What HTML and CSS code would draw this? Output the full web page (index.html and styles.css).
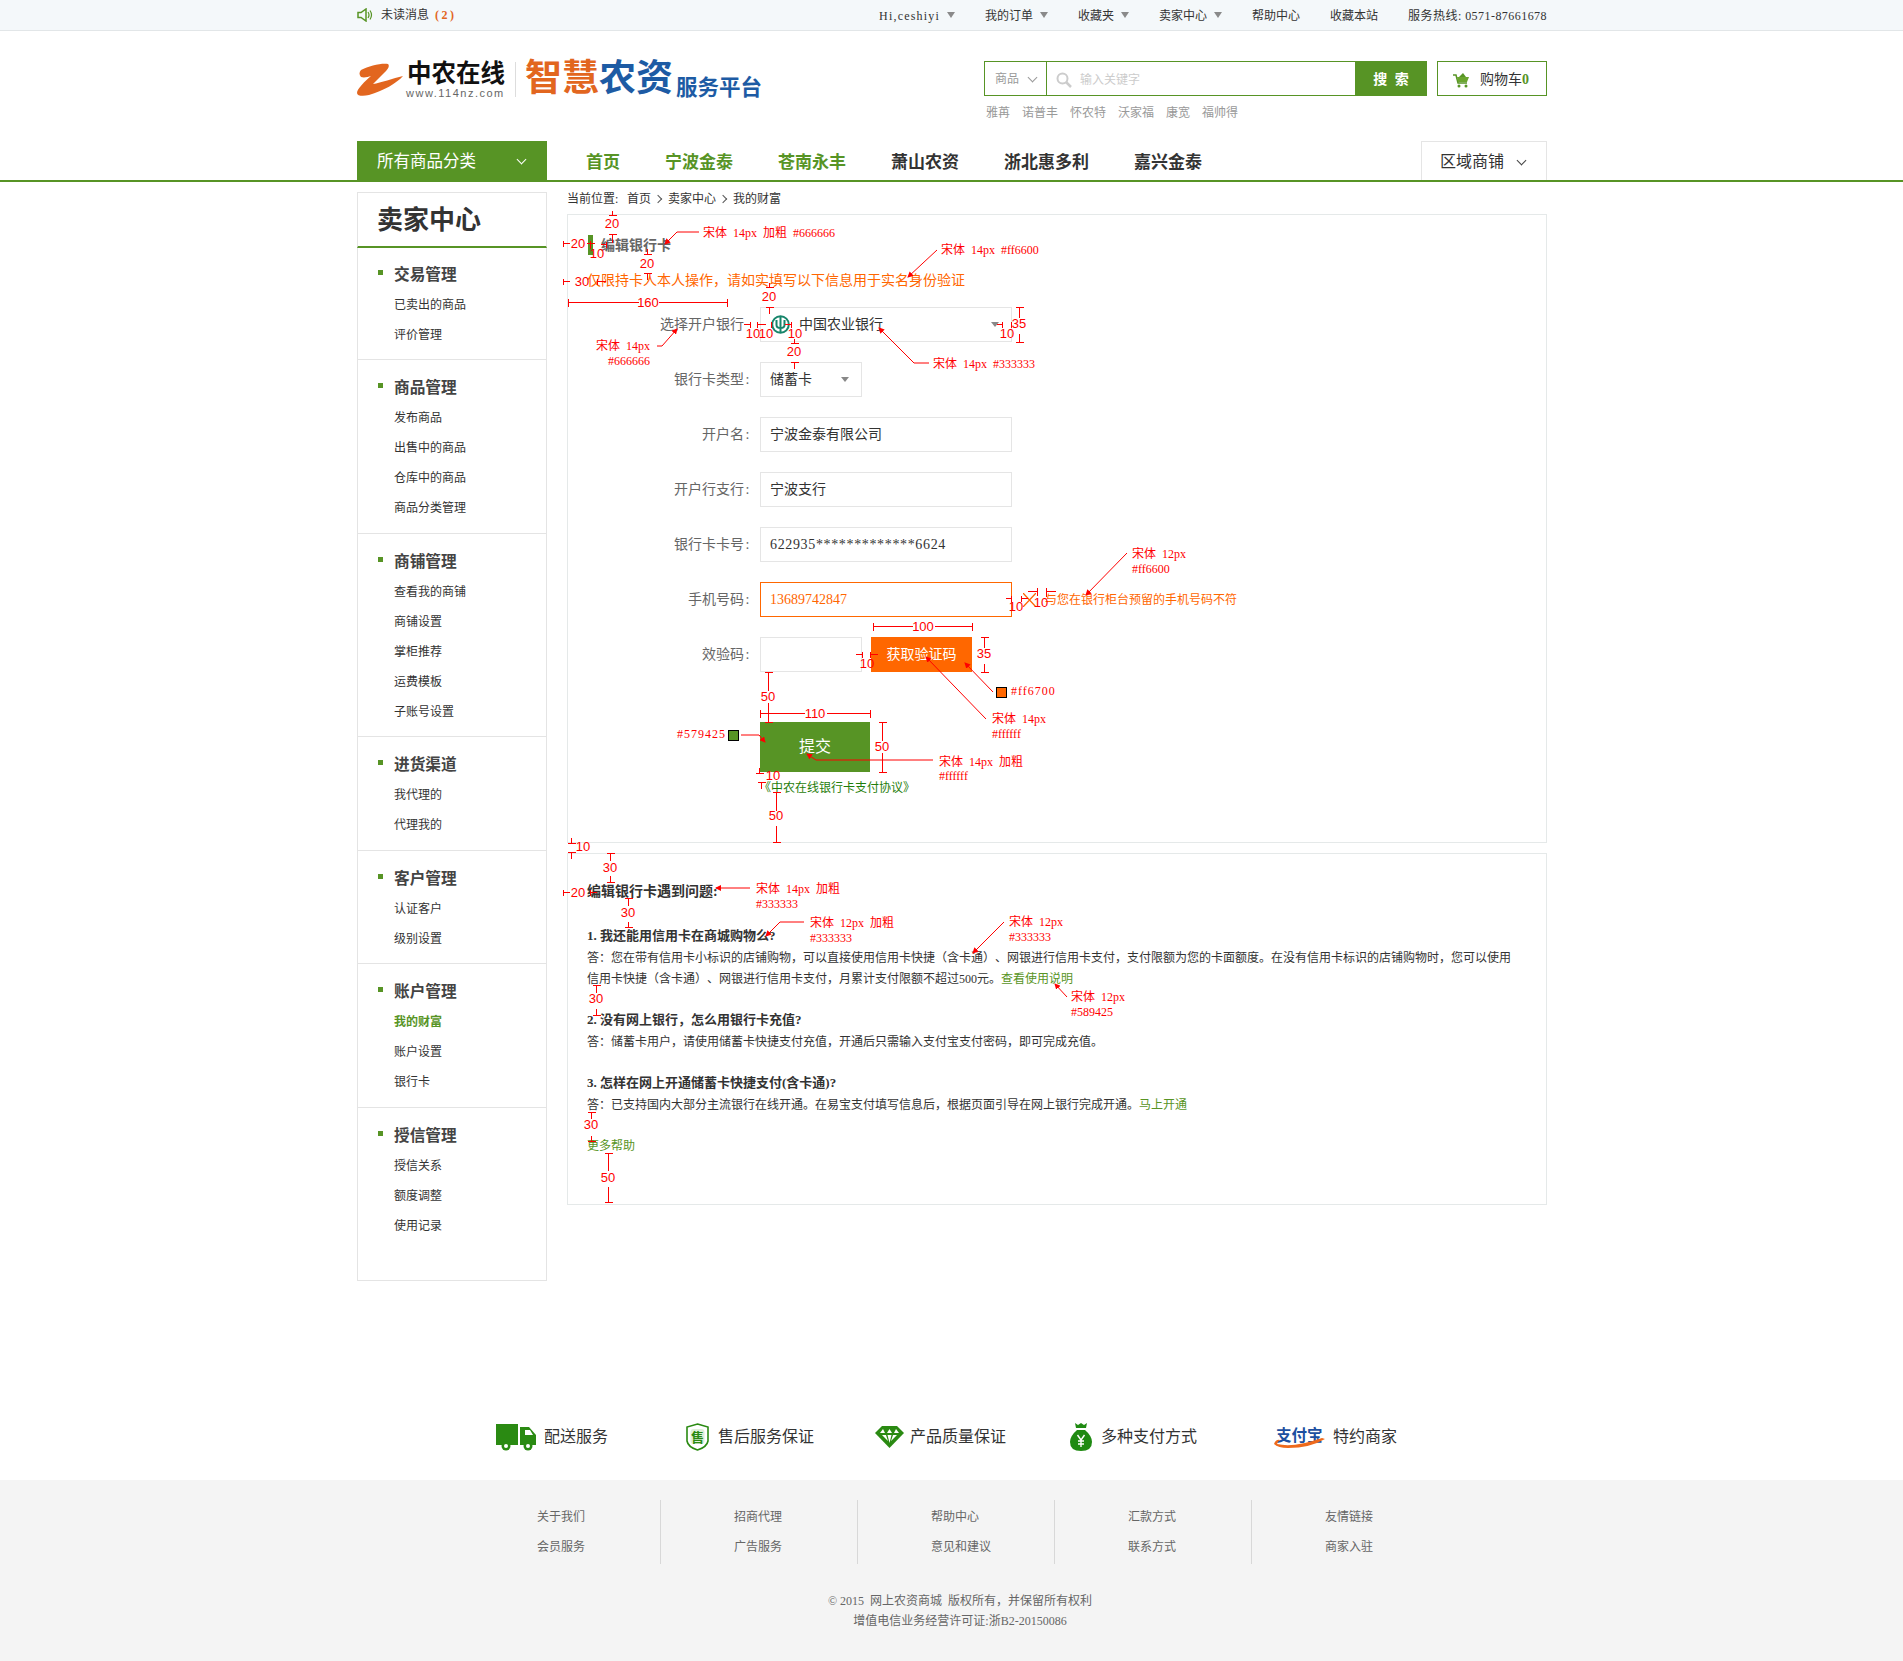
FILE: index.html
```html
<!DOCTYPE html>
<html lang="zh-CN">
<head>
  <meta charset="UTF-8">
  <meta name="viewport" content="width=device-width, initial-scale=1.0">
  <title>编辑银行卡 - 卖家中心</title>
  <link rel="stylesheet" href="styles.css">
</head>
<body>
  <div class="topbar">
    <div class="wrap topbar-in">
      <div class="msg">
        <svg class="speaker" width="16" height="14" viewBox="0 0 16 14"><path d="M1 4.5H4L9 1V13L4 9.5H1Z" fill="none" stroke="#579425" stroke-width="1.5"/><path d="M11 4Q13 7 11 10M13 2.5Q16 7 13 11.5" fill="none" stroke="#579425" stroke-width="1.2"/></svg>
        <span>未读消息</span>
        <b class="msg-count">(2)</b>
      </div>
      <div class="toplinks">
        <span class="drop user-name">Hi,ceshiyi</span>
        <span class="drop">我的订单</span>
        <span class="drop">收藏夹</span>
        <span class="drop">卖家中心</span>
        <span>帮助中心</span>
        <span>收藏本站</span>
        <span class="hotline">服务热线: 0571-87661678</span>
      </div>
    </div>
  </div>

  <div class="wrap header">
    <div class="logo">
      <svg class="logo-mark" width="46" height="34" viewBox="0 0 46 34"><path d="M4 7C12 3 24 0 31 1C33 3 31 6 28 9C24 13 20 17 16 21C24 20 36 15 46 13C40 20 26 28 12 32C6 33.500 0 33 0 30C0 26 8 18 14 13C11 14 7 15 4 14C2 12 2 9 4 7Z" fill="#e2661f"/></svg>
      <div class="logo-name">
        <div class="logo-cn">中农在线</div>
        <div class="logo-url">www.114nz.com</div>
      </div>
      <div class="logo-line"></div>
      <div class="brand"><span class="brand-o">智慧</span><span class="brand-b">农资</span><span class="brand-sub">服务平台</span></div>
    </div>
    <div class="search-col">
      <div class="search-row">
        <div class="search-box">
          <div class="search-type">商品<i class="chev chev-grey"></i></div>
          <div class="search-input">
            <svg width="16" height="16" viewBox="0 0 16 16"><circle cx="6.500" cy="6.500" r="5" fill="none" stroke="#ccc" stroke-width="2"/><path d="M10 10L15 15" stroke="#ccc" stroke-width="2.500"/></svg>
            <span>输入关键字</span>
          </div>
          <div class="search-btn">搜 索</div>
        </div>
        <div class="cart">
          <svg width="17" height="16" viewBox="0 0 17 16"><path d="M0 3H3L5 11H14" fill="none" stroke="#579425" stroke-width="1.500"/><path d="M4 5H16L14 10H5Z" fill="#6aa52e"/><path d="M6 5L10 1L13 5Z" fill="#579425"/><circle cx="6" cy="14" r="1.500" fill="#579425"/><circle cx="13" cy="14" r="1.500" fill="#579425"/></svg>
          <span>购物车</span><b>0</b>
        </div>
      </div>
      <div class="hot-words">
        <span>雅苒</span><span>诺普丰</span><span>怀农特</span><span>沃家福</span><span>康宽</span><span>福帅得</span>
      </div>
    </div>
  </div>

  <div class="nav">
    <div class="wrap nav-in">
      <div class="nav-cat">所有商品分类<i class="chev chev-white"></i></div>
      <div class="nav-list">
        <a class="nav-green">首页</a>
        <a class="nav-green">宁波金泰</a>
        <a class="nav-green">苍南永丰</a>
        <a>萧山农资</a>
        <a>浙北惠多利</a>
        <a>嘉兴金泰</a>
      </div>
      <div class="nav-area">区域商铺<i class="chev chev-dark"></i></div>
    </div>
  </div>

  <div class="wrap main">
    <div class="sidebar">
      <div class="side-title">卖家中心</div>
      <div class="side-list">
        <div class="side-group">
          <h3>交易管理</h3>
          <a>已卖出的商品</a>
          <a>评价管理</a>
        </div>
        <div class="side-group">
          <h3>商品管理</h3>
          <a>发布商品</a>
          <a>出售中的商品</a>
          <a>仓库中的商品</a>
          <a>商品分类管理</a>
        </div>
        <div class="side-group">
          <h3>商铺管理</h3>
          <a>查看我的商铺</a>
          <a>商铺设置</a>
          <a>掌柜推荐</a>
          <a>运费模板</a>
          <a>子账号设置</a>
        </div>
        <div class="side-group">
          <h3>进货渠道</h3>
          <a>我代理的</a>
          <a>代理我的</a>
        </div>
        <div class="side-group">
          <h3>客户管理</h3>
          <a>认证客户</a>
          <a>级别设置</a>
        </div>
        <div class="side-group">
          <h3>账户管理</h3>
          <a class="side-active">我的财富</a>
          <a>账户设置</a>
          <a>银行卡</a>
        </div>
        <div class="side-group side-last">
          <h3>授信管理</h3>
          <a>授信关系</a>
          <a>额度调整</a>
          <a>使用记录</a>
        </div>
      </div>
    </div>

    <div class="content">
      <div class="crumb">
        <span class="crumb-head">当前位置:</span><span>首页</span><i class="crumb-sep"></i><span>卖家中心</span><i class="crumb-sep"></i><span>我的财富</span>
      </div>

      <div class="panel panel-form">
        <div class="panel-title">编辑银行卡</div>
        <div class="notice">仅限持卡人本人操作，请如实填写以下信息用于实名身份验证</div>

        <div class="form-row">
          <label>选择开户银行<span class="colon"></span></label>
          <div class="field field-select">
            <svg class="bank-icon" width="19" height="19" viewBox="0 0 19 19"><circle cx="9.500" cy="9.500" r="8.300" fill="none" stroke="#17856b" stroke-width="2"/><path d="M9.500 1V18M5.500 5V10Q5.500 13 9.500 13Q13.500 13 13.500 10V5" fill="none" stroke="#17856b" stroke-width="2"/></svg>
            <span>中国农业银行</span>
            <i class="tri"></i>
          </div>
        </div>
        <div class="form-row">
          <label>银行卡类型<span class="colon">:</span></label>
          <div class="field field-small field-select"><span>储蓄卡</span><i class="tri"></i></div>
        </div>
        <div class="form-row">
          <label>开户名<span class="colon">:</span></label>
          <div class="field">宁波金泰有限公司</div>
        </div>
        <div class="form-row">
          <label>开户行支行<span class="colon">:</span></label>
          <div class="field">宁波支行</div>
        </div>
        <div class="form-row">
          <label>银行卡卡号<span class="colon">:</span></label>
          <div class="field field-card">622935*************6624</div>
        </div>
        <div class="form-row">
          <label>手机号码<span class="colon">:</span></label>
          <div class="field field-error">13689742847</div>
          <svg class="err-icon" width="13" height="14" viewBox="0 0 13 14"><path d="M0 0L13 14M13 0L0 14" stroke="#ff6600" stroke-width="1.300"/></svg>
          <span class="err-text">与您在银行柜台预留的手机号码不符</span>
        </div>
        <div class="form-row">
          <label>效验码<span class="colon">:</span></label>
          <div class="field field-small"></div>
          <div class="code-btn">获取验证码</div>
        </div>
        <div class="submit-btn">提交</div>
        <a class="agree">《中农在线银行卡支付协议》</a>
      </div>

      <div class="panel panel-qa">
        <div class="qa-head">编辑银行卡遇到问题:</div>
        <div class="qa-first">
          <div class="qa-q"><span class="qa-n">1.</span>我还能用信用卡在商城购物么?</div>
          <div class="qa-a">答：您在带有信用卡小标识的店铺购物，可以直接使用信用卡快捷（含卡通）、网银进行信用卡支付，支付限额为您的卡面额度。在没有信用卡标识的店铺购物时，您可以使用<br>信用卡快捷（含卡通）、网银进行信用卡支付，月累计支付限额不超过500元。<a>查看使用说明</a></div>
        </div>
        <div class="qa-item">
          <div class="qa-q"><span class="qa-n">2.</span>没有网上银行，怎么用银行卡充值?</div>
          <div class="qa-a">答：储蓄卡用户，请使用储蓄卡快捷支付充值，开通后只需输入支付宝支付密码，即可完成充值。</div>
        </div>
        <div class="qa-item">
          <div class="qa-q"><span class="qa-n">3.</span>怎样在网上开通储蓄卡快捷支付(含卡通)?</div>
          <div class="qa-a">答：已支持国内大部分主流银行在线开通。在易宝支付填写信息后，根据页面引导在网上银行完成开通。<a>马上开通</a></div>
        </div>
        <div class="qa-item qa-more"><a>更多帮助</a></div>
      </div>
    </div>
  </div>

  <div class="wrap services">
    <div class="svc svc-truck">
      <svg width="40" height="28" viewBox="0 0 40 28"><path d="M0 1H22V22H0ZM24 4H33L40 12V22H24Z" fill="#2a8a12"/><path d="M29 7H34L37 12H29Z" fill="#fff"/><circle cx="10" cy="23" r="4.500" fill="#2a8a12"/><circle cx="10" cy="23" r="2" fill="#fff"/><circle cx="32" cy="23" r="4.500" fill="#2a8a12"/><circle cx="32" cy="23" r="2" fill="#fff"/></svg>
      <span>配送服务</span>
    </div>
    <div class="svc svc-shield">
      <svg width="23" height="28" viewBox="0 0 23 28"><path d="M11.500 1L22 4V18Q21 24 11.500 27Q2 24 1 18V4Z" fill="#fff" stroke="#2a8a12" stroke-width="1.600"/><rect x="4.500" y="6" width="14" height="15" rx="3" fill="#dff0d8"/><text class="svc-glyph" x="11.500" y="18.500">售</text></svg>
      <span>售后服务保证</span>
    </div>
    <div class="svc svc-diamond">
      <svg width="29" height="22" viewBox="0 0 29 22"><path d="M7 0H22L29 7L14.500 22L0 7Z" fill="#2a8a12"/><path d="M5 7L8 3L10 7ZM12 7L14.500 3L17 7ZM19 7L21 3L24 7ZM7 9H11L13 15ZM16 15L18 9H22ZM12.500 9H16.500L14.500 17Z" fill="#fff"/></svg>
      <span>产品质量保证</span>
    </div>
    <div class="svc svc-bag">
      <svg width="22" height="28" viewBox="0 0 22 28"><path d="M5 0L8 2L11 0L14 2L17 0L16 5H6Z" fill="#1f8a12"/><path d="M7 7H15Q22 13 22 19Q22 28 11 28Q0 28 0 19Q0 13 7 7Z" fill="#1f8a12"/><path d="M7.500 12L11 17L14.500 12M11 17V24M8 18H14M8 21H14" fill="none" stroke="#fff" stroke-width="1.400"/></svg>
      <span>多种支付方式</span>
    </div>
    <div class="svc svc-ali">
      <div class="ali-logo">
        <span class="ali-text">支付宝</span>
        <svg class="ali-swoosh" width="51" height="10" viewBox="0 0 51 10"><path d="M0 6Q2 1 6 2Q4 3 3 6Q20 10 48 0L51 1Q36 10 14 10Q4 10 0 6Z" fill="#ee6a1c"/></svg>
      </div>
      <span>特约商家</span>
    </div>
  </div>

  <div class="footer">
    <div class="foot-cols">
      <div class="foot-col"><a>关于我们</a><a>会员服务</a></div>
      <div class="foot-col"><a>招商代理</a><a>广告服务</a></div>
      <div class="foot-col"><a>帮助中心</a><a>意见和建议</a></div>
      <div class="foot-col"><a>汇款方式</a><a>联系方式</a></div>
      <div class="foot-col foot-last"><a>友情链接</a><a>商家入驻</a></div>
    </div>
    <div class="copyright">
      <div>© 2015&nbsp; 网上农资商城&nbsp; 版权所有，并保留所有权利</div>
      <div>增值电信业务经营许可证:浙B2-20150086</div>
    </div>
  </div>

  <svg class="marks" width="1903" height="1661" viewBox="0 0 1903 1661">
    <defs>
      <marker id="arrowhead" markerWidth="6" markerHeight="6" refX="5" refY="3" orient="auto"><path d="M0 0L6 3L0 6Z" fill="#f00"/></marker>
    </defs>
    <g transform="translate(.5 .5)">
      <path class="dim" d="M612 210V215M608 215H616M608 234H616M612 234V242M563 240V246M563 243H569M590 240V248M586 243H594M600 244H606M606 241V247M647 248V254M643 254H651M643 273H651M647 273V279M563 278V284M563 281H569M597 278V284M597 281H605M568 298V306M727 298V306M568 302H638M658 302H727M769 282V287M765 287H773M765 307H773M769 307V313M750 321V327M743 324H750M757 321V327M757 324H765M771 321V327M784 324H791M791 321V327M1015 307H1023M1019 307V317M1019 333V342M1015 342H1023M1002 321V327M1011 321V327M996 324H1002M790 343H798M794 338V343M790 362H798M794 362V368"/>
      <path class="dim" d="M1005 598H1011M1011 595V601M1021 595V601M1021 598H1027M1027 591H1037M1037 587V595M1046 587V596M1046 591H1055M855 654H862M862 651V657M870 651V657M870 654H877M873 622V630M972 622V630M873 626H912M934 626H972M980 637H988M984 637V647M984 663V672M980 672H988M764 672H772M768 672V690M768 702V722M764 722H772M760 709V717M870 709V717M760 713H804M826 713H870M878 722H886M882 722V740M882 752V772M878 772H886M759 767V773M755 773H763M757 782H765M761 782V788M772 792H780M776 792V810M776 825V842M772 842H780"/>
      <path class="dim" d="M571 837V843M567 843H575M567 852H575M571 852V858M606 853H614M610 853V860M610 875V882M606 882H614M563 889V895M563 892H569M590 889V895M590 892H596M624 898H632M628 898V905M628 921V927M624 927H632M592 985H600M596 985V992M596 1008V1015M592 1015H600M587 1112H595M591 1112V1118M591 1135V1141M587 1141H595M604 1153H612M608 1153V1170M608 1186V1202M604 1202H612"/>
    </g>
    <path class="lead" d="M699 232H677L665 244" marker-end="url(#arrowhead)"/>
    <path class="lead" d="M937 250L908 277" marker-end="url(#arrowhead)"/>
    <path class="lead" d="M657 346H662L677 329" marker-end="url(#arrowhead)"/>
    <path class="lead" d="M929 363H914L879 328" marker-end="url(#arrowhead)"/>
    <path class="lead" d="M1127 553L1086 595" marker-end="url(#arrowhead)"/>
    <path class="lead" d="M986 719L926 657" marker-end="url(#arrowhead)"/>
    <path class="lead" d="M993 692L965 663" marker-end="url(#arrowhead)"/>
    <path class="lead" d="M741 735H759L765 742" marker-end="url(#arrowhead)"/>
    <path class="lead" d="M933 760H816L807 754" marker-end="url(#arrowhead)"/>
    <path class="lead" d="M750 888H716" marker-end="url(#arrowhead)"/>
    <path class="lead" d="M804 922H780L766 936" marker-end="url(#arrowhead)"/>
    <path class="lead" d="M1004 922L973 953" marker-end="url(#arrowhead)"/>
    <path class="lead" d="M1067 997L1055 984" marker-end="url(#arrowhead)"/>

    <rect class="swatch-o" x="996.500" y="687.500" width="10" height="10"/>
    <rect class="swatch-g" x="728.500" y="730.500" width="10" height="10"/>

    <text class="num" x="612" y="228">20</text>
    <text class="num" x="578" y="248">20</text>
    <text class="num" x="597" y="258">10</text>
    <text class="num" x="647" y="268">20</text>
    <text class="num" x="582" y="286">30</text>
    <text class="num" x="648" y="307">160</text>
    <text class="num" x="769" y="301">20</text>
    <text class="num" x="753" y="338">10</text>
    <text class="num" x="766" y="338">10</text>
    <text class="num" x="795" y="338">10</text>
    <text class="num" x="1019" y="328">35</text>
    <text class="num" x="1007" y="338">10</text>
    <text class="num" x="794" y="356">20</text>
    <text class="num" x="1016" y="611">10</text>
    <text class="num" x="1041" y="607">10</text>
    <text class="num" x="867" y="668">10</text>
    <text class="num" x="923" y="631">100</text>
    <text class="num" x="984" y="658">35</text>
    <text class="num" x="768" y="701">50</text>
    <text class="num" x="815" y="718">110</text>
    <text class="num" x="882" y="751">50</text>
    <text class="num" x="773" y="780">10</text>
    <text class="num" x="776" y="820">50</text>
    <text class="num" x="583" y="851">10</text>
    <text class="num" x="610" y="872">30</text>
    <text class="num" x="578" y="897">20</text>
    <text class="num" x="628" y="917">30</text>
    <text class="num" x="596" y="1003">30</text>
    <text class="num" x="591" y="1129">30</text>
    <text class="num" x="608" y="1182">50</text>

    <text class="note" x="703" y="237">宋体 14px 加粗 #666666</text>
    <text class="note" x="941" y="254">宋体 14px #ff6600</text>
    <text class="note" x="596" y="350">宋体 14px</text>
    <text class="note" x="608" y="365">#666666</text>
    <text class="note" x="933" y="368">宋体 14px #333333</text>
    <text class="note" x="1132" y="558">宋体 12px</text>
    <text class="note" x="1132" y="573">#ff6600</text>
    <text class="note note-wide" x="1011" y="695">#ff6700</text>
    <text class="note" x="992" y="723">宋体 14px</text>
    <text class="note" x="992" y="738">#ffffff</text>
    <text class="note note-wide" x="677" y="738">#579425</text>
    <text class="note" x="939" y="766">宋体 14px 加粗</text>
    <text class="note" x="939" y="780">#ffffff</text>
    <text class="note" x="756" y="893">宋体 14px 加粗</text>
    <text class="note" x="756" y="908">#333333</text>
    <text class="note" x="810" y="927">宋体 12px 加粗</text>
    <text class="note" x="810" y="942">#333333</text>
    <text class="note" x="1009" y="926">宋体 12px</text>
    <text class="note" x="1009" y="941">#333333</text>
    <text class="note" x="1071" y="1001">宋体 12px</text>
    <text class="note" x="1071" y="1016">#589425</text>
  </svg>
</body>
</html>
```

FILE: styles.css
```css
body {
  position: relative;
  margin: 0;
  font-family: "Liberation Serif", "Noto Sans CJK SC", sans-serif;
  font-size: 12px;
  line-height: 20px;
  color: #333;
  background-color: #fff;
  text-spacing-trim: space-all;
}

.wrap {
  width: 1190px;
  margin-left: 357px;
}

/* top bar */
.topbar {
  height: 30px;
  background-color: #f4f8fa;
  border-bottom: 1px solid #e2e6e8;
}

.topbar-in {
  display: flex;
  justify-content: space-between;
  align-items: center;
  height: 30px;
}

.msg {
  display: flex;
  align-items: center;
}

.speaker {
  margin-right: 8px;
}

.msg-count {
  margin-left: 6px;
  color: #e2661f;
  letter-spacing: 2.5px;
}

.toplinks {
  display: flex;
  gap: 30px;
  align-items: center;
  padding-top: 2px;
}

.drop::after {
  content: "";
  display: inline-block;
  margin-left: 7px;
  vertical-align: 2px;
  border-left: 4px solid transparent;
  border-right: 4px solid transparent;
  border-top: 6px solid #8a8a8a;
}

.user-name {
  letter-spacing: 1.2px;
}

.hotline {
  letter-spacing: .45px;
}

/* header */
.header {
  display: flex;
  justify-content: space-between;
  height: 80px;
  padding-top: 30px;
}

.logo {
  display: flex;
  align-items: flex-start;
  height: 36px;
  margin-top: 1px;
}

.logo-mark {
  margin-top: 1px;
  margin-right: 3px;
}

.logo-name {
  width: 100px;
}

.logo-cn {
  font-size: 24.5px;
  font-weight: bold;
  line-height: 24px;
  color: #111;
  margin-left: 1px;
}

.logo-url {
  font-family: "Liberation Sans", sans-serif;
  font-size: 11px;
  line-height: 12px;
  letter-spacing: 1.5px;
  color: #666;
  margin-top: 1px;
}

.logo-line {
  width: 1px;
  height: 35px;
  margin-left: 9px;
  background-color: #ddd;
}

.brand {
  display: flex;
  align-items: flex-end;
  margin-left: 9px;
  height: 36px;
  line-height: 38px;
  font-weight: bold;
  font-size: 37px;
}

.brand-o {
  color: #e2661f;
}

.brand-b {
  color: #1d5ba4;
}

.brand-sub {
  margin-left: 3px;
  font-size: 21.5px;
  line-height: 19px;
  color: #1d5ba4;
}

.search-row {
  display: flex;
}

.search-box {
  display: flex;
  width: 443px;
  height: 35px;
  box-sizing: border-box;
  border: 1px solid #579425;
}

.search-type {
  display: flex;
  align-items: center;
  width: 62px;
  box-sizing: border-box;
  padding: 2px 0 0 10px;
  border-right: 1px solid #579425;
  color: #999;
  line-height: 33px;
}

.search-type .chev {
  margin-left: 10px;
  margin-top: -4px;
}

.search-input {
  display: flex;
  align-items: center;
  flex: 1;
  padding: 2px 0 0 9px;
  color: #ccc;
}

.search-input span {
  margin-left: 8px;
}

.search-btn {
  width: 72px;
  margin: -1px -1px -1px 0;
  background-color: #579425;
  color: #fff;
  font-size: 14px;
  font-weight: bold;
  line-height: 37px;
  height: 35px;
  text-align: center;
  word-spacing: 4px;
}

.cart {
  display: flex;
  align-items: center;
  width: 110px;
  height: 35px;
  box-sizing: border-box;
  margin-left: 10px;
  padding: 2px 0 0 15px;
  border: 1px solid #579425;
  font-size: 14px;
}

.cart span {
  margin-left: 10px;
}

.cart b {
  color: #579425;
}

.hot-words {
  display: flex;
  gap: 12px;
  margin-top: 7px;
  padding-left: 2px;
  color: #999;
}

.chev {
  display: inline-block;
  width: 6px;
  height: 6px;
  transform: rotate(45deg);
  border-right: 1.5px solid #999;
  border-bottom: 1.5px solid #999;
}

.chev-white {
  border-color: #fff;
}

.chev-dark {
  border-color: #444;
}

/* nav */
.nav {
  border-bottom: 2px solid #579425;
}

.nav-in {
  display: flex;
  height: 39px;
}

.nav-cat {
  display: flex;
  justify-content: space-between;
  align-items: center;
  width: 190px;
  box-sizing: border-box;
  padding: 2px 22px 0 20px;
  background-color: #579425;
  color: #fff;
  font-size: 16.5px;
}

.nav-cat .chev {
  margin-top: -4px;
}

.nav-list {
  display: flex;
  gap: 45px;
  margin-left: 39px;
  font-size: 17px;
  font-weight: bold;
  line-height: 43px;
}

.nav-green {
  color: #579425;
}

.nav-area {
  display: flex;
  align-items: center;
  width: 126px;
  box-sizing: border-box;
  margin-left: auto;
  padding: 2px 0 0 18px;
  border: 1px solid #e5e5e5;
  border-bottom: none;
  font-size: 16px;
}

.nav-area .chev {
  margin-left: 14px;
  margin-top: -4px;
}

/* main */
.main {
  display: flex;
}

.sidebar {
  width: 190px;
  margin-top: 10px;
}

.side-title {
  box-sizing: border-box;
  height: 56px;
  padding-left: 19px;
  border: 1px solid #e4e4e4;
  border-bottom: 2px solid #579425;
  font-size: 26px;
  font-weight: bold;
  line-height: 56px;
}

.side-list {
  border: 1px solid #e4e4e4;
  border-top: none;
}

.side-group {
  padding: 13px 0 9.5px 36px;
  border-bottom: 1px solid #e4e4e4;
}

.side-group:first-child {
  padding-top: 12px;
  padding-bottom: 9px;
}

.side-group.side-last {
  padding-bottom: 39.5px;
  border-bottom: none;
}

.side-group h3 {
  position: relative;
  margin: 0;
  font-size: 15.7px;
  font-weight: bold;
  line-height: 30px;
  color: #444;
}

.side-group h3::before {
  content: "";
  position: absolute;
  left: -16px;
  top: 10px;
  width: 5px;
  height: 5px;
  background-color: #579425;
}

.side-group a {
  display: block;
  line-height: 30px;
}

.side-group a.side-active {
  color: #579425;
  font-weight: bold;
}

.content {
  width: 980px;
  margin-left: 20px;
}

.crumb {
  display: flex;
  align-items: center;
  height: 30px;
  padding-top: 2px;
}

.crumb-head {
  width: 60px;
}

.crumb-sep {
  width: 5px;
  height: 5px;
  margin: 0 7px 0 4px;
  transform: rotate(-45deg);
  border-right: 1px solid #555;
  border-bottom: 1px solid #555;
}

.panel {
  box-sizing: border-box;
  border: 1px solid #e5e9e9;
}

.panel-form {
  height: 629px;
  padding: 20px 0 0 20px;
}

.panel-title {
  height: 20px;
  padding-left: 8px;
  border-left: 5px solid #579425;
  color: #666;
  font-size: 14px;
  font-weight: bold;
  line-height: 22px;
}

.notice {
  margin: 16px 0 16px -1px;
  color: #ff6600;
  font-size: 14px;
  line-height: 20px;
}

.form-row {
  display: flex;
  align-items: center;
  height: 35px;
  margin-bottom: 20px;
  font-size: 14px;
}

.form-row label {
  width: 163px;
  margin-right: 9px;
  color: #666;
  text-align: right;
}

.colon {
  display: inline-block;
  width: 7px;
  text-align: center;
}

.field {
  display: flex;
  align-items: center;
  width: 252px;
  height: 35px;
  box-sizing: border-box;
  padding: 0 9px;
  border: 1px solid #e5e5e5;
}

.field-small {
  width: 102px;
}

.field-select {
  justify-content: flex-start;
}

.field-select .tri {
  margin-left: auto;
  margin-right: 3px;
}

.tri {
  border-left: 4px solid transparent;
  border-right: 4px solid transparent;
  border-top: 5px solid #888;
}

.bank-icon {
  margin-left: 1px;
  margin-right: 9px;
}

.field-card {
  letter-spacing: .65px;
}

.field-error {
  border-color: #ff6700;
  color: #ff6600;
}

.err-icon {
  margin-left: 11px;
}

.err-text {
  margin-left: 9px;
  color: #ff6600;
  font-size: 12px;
}

.code-btn {
  width: 101px;
  margin-left: 9px;
  background-color: #ff6700;
  color: #fff;
  line-height: 35px;
  text-align: center;
}

.submit-btn {
  width: 110px;
  margin: 50px 0 0 172px;
  background-color: #579425;
  color: #fff;
  font-size: 16px;
  line-height: 50px;
  text-align: center;
}

.agree {
  display: block;
  margin: 10px 0 0 171px;
  color: #1f7d0a;
  line-height: 12px;
}

.panel-qa {
  height: 352px;
  margin-top: 10px;
  padding: 27px 0 0 19px;
}

.qa-head {
  font-size: 14px;
  font-weight: bold;
  line-height: 22px;
}

.qa-first {
  margin-top: 23px;
}

.qa-item {
  margin-top: 20px;
}

.qa-q {
  margin-bottom: 2px;
  font-size: 13px;
  font-weight: bold;
  line-height: 19px;
}

.qa-n {
  display: inline-block;
  width: 13px;
}

.qa-a {
  padding-top: 1px;
  line-height: 21px;
}

.qa-a a,
.qa-more a {
  color: #589425;
}

/* services */
.services {
  display: flex;
  align-items: center;
  padding: 142px 0 29px 139px;
  width: auto;
  font-size: 16px;
  line-height: 28px;
}

.svc {
  display: flex;
  align-items: center;
  height: 28px;
}

.svc-truck svg {
  margin-right: 8px;
}

.svc-shield {
  margin-left: 78px;
}

.svc-shield svg {
  margin-right: 9px;
}

.svc-diamond {
  margin-left: 61px;
}

.svc-diamond svg {
  margin-right: 6px;
}

.svc-bag {
  margin-left: 64px;
}

.svc-bag svg {
  margin-right: 9px;
}

.svc-ali {
  margin-left: 77px;
}

.svc-glyph {
  fill: #2a8a12;
  font-size: 13px;
  font-weight: bold;
  text-anchor: middle;
}

.ali-logo {
  position: relative;
  width: 51px;
  height: 20px;
  margin-right: 8px;
}

.ali-text {
  position: absolute;
  left: 2px;
  top: -1px;
  color: #1d4fa0;
  font-size: 15.5px;
  font-weight: bold;
  line-height: 20px;
}

.ali-swoosh {
  position: absolute;
  left: 0;
  bottom: -1px;
}

/* footer */
.footer {
  box-sizing: border-box;
  height: 181px;
  padding-top: 20px;
  background-color: #f4f4f4;
  color: #666;
}

.foot-cols {
  display: flex;
  margin-left: 464px;
}

.foot-col {
  box-sizing: border-box;
  width: 197px;
  height: 64px;
  padding: 2px 0 0 73px;
  border-right: 1px solid #d8d8d8;
}

.foot-col.foot-last {
  border-right: none;
}

.foot-col a {
  display: block;
  line-height: 30px;
}

.copyright {
  margin-top: 27px;
  padding-left: 17px;
  text-align: center;
}

/* annotation layer */
.marks {
  position: absolute;
  top: 0;
  left: 0;
  pointer-events: none;
}

.dim {
  fill: none;
  stroke: #f00;
  stroke-width: 1;
  shape-rendering: crispEdges;
}

.lead {
  fill: none;
  stroke: #f00;
  stroke-width: 1;
}

.swatch-o,
.swatch-g {
  stroke: #000;
  stroke-width: 1;
}

.swatch-o {
  fill: #ff6700;
}

.swatch-g {
  fill: #579425;
}

.num {
  fill: #f00;
  font-family: "Liberation Sans", sans-serif;
  font-size: 13px;
  text-anchor: middle;
}

.note {
  fill: #f00;
  font-size: 12px;
  word-spacing: 3px;
}

.note-wide {
  letter-spacing: 1px;
}
```
